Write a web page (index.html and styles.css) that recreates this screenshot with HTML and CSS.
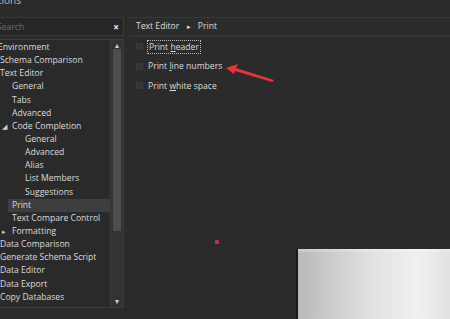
FILE: index.html
```html
<!DOCTYPE html>
<html lang="en">
<head>
    <meta charset="UTF-8">
    <title>Options</title>
    <link rel="stylesheet" href="styles.css">
</head>
<body>
    <div class="titlebar"><span class="title">Options</span></div>
    <div class="main">
        <!-- left side: search + tree -->
        <div class="side">
            <div class="search">
                <span class="placeholder">Search</span>
                <span class="clear">&#215;</span>
            </div>
            <div class="tree">
                <ul class="items">
                    <li class="l0">Environment</li>
                    <li class="l0">Schema Comparison</li>
                    <li class="l0">Text Editor</li>
                    <li class="l1">General</li>
                    <li class="l1">Tabs</li>
                    <li class="l1">Advanced</li>
                    <li class="l1"><span class="arrow open">&#9698;</span>Code Completion</li>
                    <li class="l2">General</li>
                    <li class="l2">Advanced</li>
                    <li class="l2">Alias</li>
                    <li class="l2">List Members</li>
                    <li class="l2">Suggestions</li>
                    <li class="l1 selected">Print</li>
                    <li class="l1">Text Compare Control</li>
                    <li class="l1"><span class="arrow">&#9656;</span>Formatting</li>
                    <li class="l0">Data Comparison</li>
                    <li class="l0">Generate Schema Script</li>
                    <li class="l0">Data Editor</li>
                    <li class="l0">Data Export</li>
                    <li class="l0">Copy Databases</li>
                </ul>
                <div class="scrollbar">
                    <span class="sb-up">&#9652;</span>
                    <div class="thumb"></div>
                    <span class="sb-down">&#9662;</span>
                </div>
            </div>
        </div>

        <!-- right side: page -->
        <div class="page">
            <div class="crumbs">Text Editor <span class="sep">&#9656;</span> Print</div>
            <div class="options">
                <label class="opt"><span class="box"></span><span class="focus">Print <u>h</u>eader</span></label>
                <label class="opt"><span class="box"></span><span>Print <u>l</u>ine numbers</span></label>
                <label class="opt"><span class="box"></span><span>Print <u>w</u>hite space</span></label>
            </div>
            <svg class="pointer" width="60" height="22" viewBox="0 0 60 22">
                <path d="M2 6 L14 2 L12 6 L50 18 L48 20 L11 9 L10 12 Z" fill="#e8323c"/>
            </svg>
            <span class="dot"></span>
            <div class="watermark"></div>
        </div>
    </div>
</body>
</html>
```

FILE: styles.css
```css
/* base */
body {
    margin: 0;
    width: 450px;
    height: 319px;
    overflow: hidden;
    background-color: #2b2b2b;
    font-family: "Open Sans", "Noto Sans", sans-serif;
    font-size: 8.6px;
    color: #dcdcdc;
}

.titlebar {
    height: 12px;
    overflow: hidden;
}

.title {
    display: block;
    margin-top: -7px;
    margin-left: -16px;
    color: #bbb;
    font-size: 10px;
}

.main {
    display: flex;
    gap: 5px;
    padding-top: 5px;
}

/* left column */
.side {
    width: 124px;
    display: flex;
    flex-direction: column;
    gap: 3px;
}

.search {
    height: 17px;
    background-color: #262626;
    border: 1px solid #3a3a3a;
    border-left: none;
    display: flex;
    align-items: center;
    justify-content: space-between;
    padding-right: 4px;
}

.placeholder {
    color: #6c6c6c;
    margin-left: -3px;
}

.clear {
    color: #f0f0f0;
    font-weight: bold;
    font-size: 10px;
}

.tree {
    height: 267px;
    border: 1px solid #3d3d3d;
    border-left: none;
    background-color: #2a2a2a;
    display: flex;
}

.items {
    list-style: none;
    margin: 0;
    padding: 1px 0 0 0;
    flex: 1;
}

.items li {
    height: 13.15px;
    line-height: 13px;
    white-space: nowrap;
    position: relative;
}

.l0 { padding-left: 0; }
.l0:first-child { margin-left: -2px; }
.l1 { padding-left: 12px; }
.l2 { padding-left: 25px; }

.items .selected {
    background-color: #3e3e3e;
    margin-left: 8px;
    padding-left: 4px;
}

.arrow {
    position: absolute;
    left: 2px;
    font-size: 7px;
    color: #cfcfcf;
}

.scrollbar {
    width: 12px;
    background-color: #333;
    border-left: 1px solid #3b3b3b;
    display: flex;
    flex-direction: column;
    align-items: center;
}

.sb-up, .sb-down {
    font-size: 8px;
    height: 9px;
    line-height: 9px;
    color: #cfcfcf;
}

.sb-down {
    margin-top: auto;
    margin-bottom: 2px;
}

.thumb {
    width: 8px;
    height: 182px;
    background-color: #4e4e4e;
}

/* right page */
.page {
    flex: 1;
    position: relative;
    height: 302px;
    overflow: hidden;
}

.crumbs {
    height: 17px;
    line-height: 17px;
    padding-left: 7px;
    border-top: 1px solid #383838;
    border-bottom: 2px solid #353535;
    background-color: #2c2c2c;
}

.sep {
    font-size: 7px;
    margin: 0 5px;
}

.options {
    display: flex;
    flex-direction: column;
    gap: 6.5px;
    padding: 3px 0 0 7px;
}

.opt {
    display: flex;
    align-items: center;
    gap: 5px;
    height: 13px;
}

.box {
    width: 5px;
    height: 5px;
    background-color: #353535;
    border: 1px solid #3a3a3a;
}

.focus {
    outline: 1px dotted #bbb;
    padding: 0 1px;
}

.pointer {
    position: absolute;
    left: 95px;
    top: 45px;
}

.dot {
    position: absolute;
    left: 86px;
    top: 223px;
    width: 4px;
    height: 4px;
    background-color: #c2304a;
    border-radius: 1px;
}

.watermark {
    position: absolute;
    left: 167px;
    top: 232px;
    width: 160px;
    height: 80px;
    border-left: 2px solid #1a1a1a;
    background:
        linear-gradient(180deg, rgba(255, 255, 255, 0.35) 0, rgba(255, 255, 255, 0) 4px),
        linear-gradient(90deg, #b9b9b9 0%, #cfcfcf 25%, #e4e4e4 50%, #f0f0f0 75%, #dedede 100%);
}
```
